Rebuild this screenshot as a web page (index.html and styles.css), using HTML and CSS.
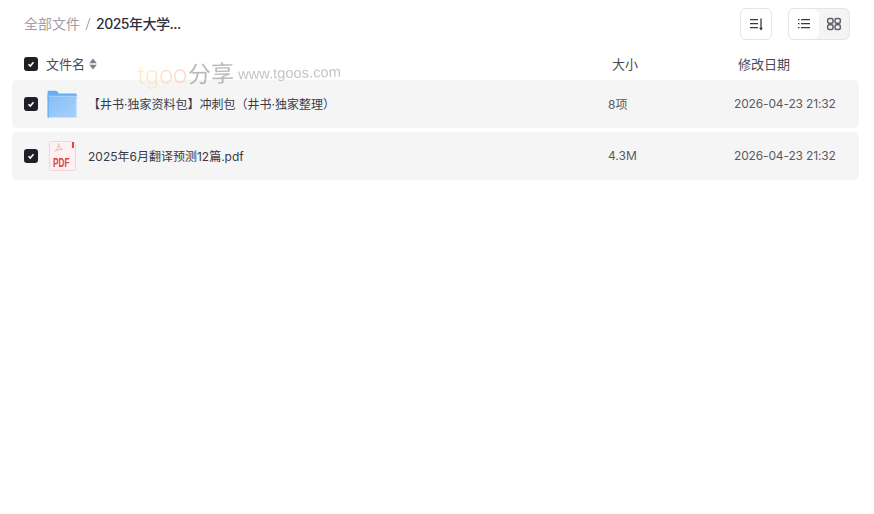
FILE: index.html
```html
<!DOCTYPE html>
<html lang="zh-CN">
<head>
<meta charset="utf-8">
<title>全部文件</title>
<link rel="stylesheet" href="styles.css">
</head>
<body>
<div class="page">
  <header class="toolbar">
    <nav class="crumbs">
      <span class="crumb-root">全部文件</span>
      <svg class="crumb-sep" width="6" height="14" viewBox="0 0 6 14" fill="none" stroke="#a4a4a8" stroke-width="1"><path d="M5 1 1 13"/></svg>
      <span class="crumb-current">2025年大学...</span>
    </nav>
    <div class="tools">
      <button class="tool-btn" type="button" aria-label="排序">
        <svg width="16" height="16" viewBox="0 0 16 16" fill="none" stroke="#3a3a46" stroke-width="1.300">
          <path d="M2 3.700h8M2 7.700h8M2 11.700h8"/><path d="M13 2.500v11"/><path d="M11.800 11.700 13 13.300l1.200-1.600"/>
        </svg>
      </button>
      <div class="view-switch">
        <span class="view-opt active">
          <svg width="16" height="16" viewBox="0 0 16 16" fill="none" stroke="#3a3a46" stroke-width="1.300">
            <path d="M5 3.700h9M5 7.700h9M5 11.700h9"/><path d="M2 3.700h1.500M2 7.700h1.500M2 11.700h1.500"/>
          </svg>
        </span>
        <span class="view-opt">
          <svg width="16" height="16" viewBox="0 0 16 16" fill="none" stroke="#5c5c66" stroke-width="1.500">
            <rect x="1.700" y="2.500" width="5.300" height="4.700" rx="1.500"/><rect x="9" y="2.500" width="5.300" height="4.700" rx="1.500"/>
            <rect x="1.700" y="8.800" width="5.300" height="4.700" rx="1.500"/><rect x="9" y="8.800" width="5.300" height="4.700" rx="1.500"/>
          </svg>
        </span>
      </div>
    </div>
  </header>

  <div class="list-head">
    <span class="check"><svg width="10" height="10" viewBox="0 0 10 10" fill="none" stroke="#fff" stroke-width="1.600"><path d="M2.500 5.200 4.300 7 7.500 3.300"/></svg></span>
    <span class="head-name"><span class="label">文件名</span>
      <svg class="sort-mark" width="8" height="12" viewBox="0 0 8 12" fill="#808087"><path d="M4 .6 7.800 5.200H.2zM4 11.400.2 6.800h7.600z"/></svg>
    </span>
    <span class="head-size label">大小</span>
    <span class="head-date label">修改日期</span>
  </div>

  <div class="rows">
    <div class="row">
      <span class="check"><svg width="10" height="10" viewBox="0 0 10 10" fill="none" stroke="#fff" stroke-width="1.600"><path d="M2.500 5.200 4.300 7 7.500 3.300"/></svg></span>
      <span class="file-icon">
        <svg width="32" height="32" viewBox="0 0 32 32">
          <defs><linearGradient id="pane" x1="0" y1="0" x2="1" y2="1"><stop offset="0" stop-color="#84bff7"/><stop offset="1" stop-color="#a6d1fa"/></linearGradient></defs>
          <path d="M1.500 4.200c0-.8.700-1.500 1.500-1.500h7c.5 0 .9.2 1.200.6L12.800 5.500H29.500c.8 0 1.300.7 1.300 1.500v4H1.500z" fill="#66aef0"/>
          <path d="M1.500 7.700h28c.8 0 1.300.6 1.300 1.400v19.400c0 .8-.5 1.300-1.300 1.300H3c-.8 0-1.500-.5-1.500-1.300z" fill="#bcdcfb"/>
          <path d="M2.500 8.500h27.300v20.500H2.500z" fill="url(#pane)"/>
          <path d="M1.500 7.700v20.800c0 .8.700 1.300 1.500 1.300V7.700z" fill="#6db3f4"/>
          <rect x="23.500" y="10.500" width="4" height="2" rx=".5" fill="#9fcbf6"/>
        </svg>
      </span>
      <span class="file-name">【井书·独家资料包】冲刺包（井书·独家整理）</span>
      <span class="file-size">8项</span>
      <span class="file-date">2026-04-23 21:32</span>
    </div>
    <div class="row">
      <span class="check"><svg width="10" height="10" viewBox="0 0 10 10" fill="none" stroke="#fff" stroke-width="1.600"><path d="M2.500 5.200 4.300 7 7.500 3.300"/></svg></span>
      <span class="file-icon">
        <svg width="32" height="32" viewBox="0 0 32 32">
          <path d="M4 1.500h22.500l3 3v25c0 .6-.4 1-1 1H4.500c-.6 0-1-.4-1-1V2z" fill="#fdf1f1" stroke="#f7d4d4"/>
          <rect x="26" y="2" width="2" height="6" fill="#e8424a"/>
          <path d="M9 11c2.500-1 3.500-4 3.500-7.500.5 3 1.500 5 4 6-3 0-5 .3-7.500 1.500z" fill="none" stroke="#f3b5b5" stroke-width="1"/>
          <text class="pdf-label" x="7" y="27" textLength="16.500" lengthAdjust="spacingAndGlyphs">PDF</text>
        </svg>
      </span>
      <span class="file-name">2025年6月翻译预测12篇.pdf</span>
      <span class="file-size">4.3M</span>
      <span class="file-date">2026-04-23 21:32</span>
    </div>
  </div>

  <div class="watermark">
    <span class="wm-brand">tgoo</span><span class="wm-share">分享</span><span class="wm-url">www.tgoos.com</span>
  </div>
</div>
</body>
</html>
```
FILE: styles.css
```css
* { box-sizing: border-box; }
html, body { margin: 0; height: 100%; background: #fff; }
body {
  font-family: Inter, "Noto Sans CJK SC", sans-serif;
  color: #3a3a46;
  font-size: 12px;
}
.page { position: relative; width: 874px; height: 514px; overflow: hidden; padding: 8px 15px 0 12px; }

.toolbar { display: flex; align-items: center; justify-content: space-between; height: 32px; padding: 0 9px 0 12px; }
.crumbs { display: flex; align-items: center; font-size: 14px; padding-bottom: 2px; }
.crumb-root { color: #a0a0a4; }
.crumb-sep { margin: 2px 5px 0 5px; }
.crumb-current { color: #30303c; font-weight: 500; letter-spacing: -.5px; }
.tools { display: flex; gap: 16px; }
.tool-btn {
  width: 32px; height: 32px; padding: 0; background: #fff;
  border: 1px solid #e6e6e8; border-radius: 6px;
  display: flex; align-items: center; justify-content: center;
}
.view-switch { display: flex; width: 62px; height: 32px; border: 1px solid #e6e6e8; border-radius: 6px; background: #f4f4f4; overflow: hidden; }
.view-opt { flex: 1; display: flex; align-items: center; justify-content: center; }
.view-opt.active { background: #fff; border-radius: 6px; }

.list-head { display: flex; align-items: center; height: 32px; margin-top: 8px; padding-left: 12px; font-size: 13px; color: #4a4a55; }
.label { padding-bottom: 2px; }
.check {
  flex: none; width: 14px; height: 14px; background: #1f1f27; border-radius: 3px;
  display: flex; align-items: center; justify-content: center;
}
.head-name { display: flex; align-items: center; gap: 4px; width: 566px; margin-left: 8px; }
.head-size { width: 126px; }

.rows { display: flex; flex-direction: column; gap: 4px; }
.row { display: flex; align-items: center; height: 48px; background: #f5f5f5; border-radius: 5px; padding-left: 12px; }
.file-icon { flex: none; display: flex; width: 32px; height: 32px; margin-left: 8px; }
.file-name { width: 520px; margin-left: 10px; padding-bottom: 1px; }
.file-size { width: 126px; color: #5a5a64; padding-bottom: 1px; }
.file-date { color: #5a5a64; padding-bottom: 1px; letter-spacing: -.15px; }
.pdf-label { font-family: "Liberation Sans", sans-serif; font-size: 12px; font-weight: 700; fill: #e2404a; }

.watermark {
  position: absolute; left: 137px; top: 57px; display: flex; align-items: baseline;
  transform: rotate(-1.500deg); transform-origin: left center; white-space: nowrap; opacity: .6;
}
.wm-brand {
  font-family: Roboto, sans-serif; font-weight: 300; font-size: 25px; margin-right: 1px;
  background: linear-gradient(90deg, #fde3a0, #fbb8a8); -webkit-background-clip: text; background-clip: text; color: transparent;
}
.wm-share { font-size: 23px; color: #8c8c8c; }
.wm-url { font-family: "Liberation Sans", sans-serif; font-size: 14.700px; color: #9c9c9c; margin-left: 4px; transform: translateY(-2px); }
```
